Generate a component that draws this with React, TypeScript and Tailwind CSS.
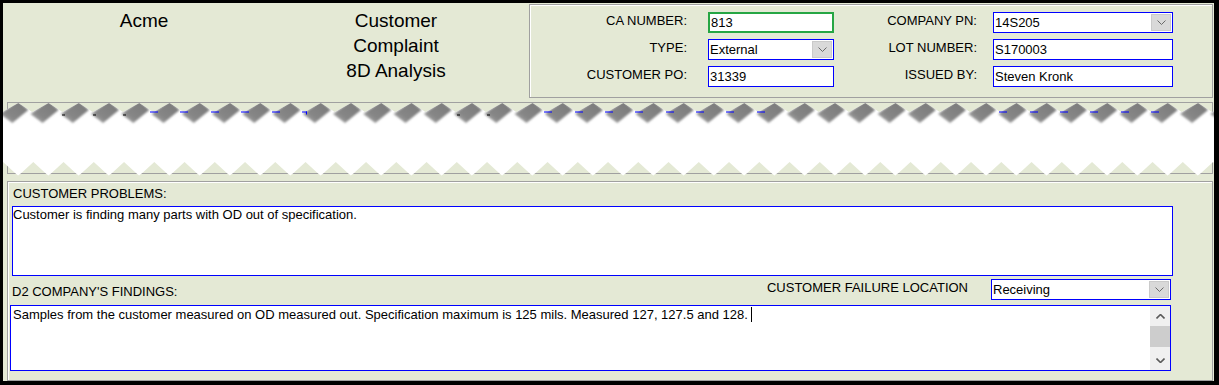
import React from "react";

interface FieldProps {
  value: string;
  width: string;
  green?: boolean;
}

interface RowProps {
  label1: string;
  field1: React.ReactNode;
  label2: string;
  field2: React.ReactNode;
}

// torn paper strip between header and form, page x 3..1214, y 102..176
const PERIOD = 30.25;
const SW = 1211;
const SH = 74;
const OX = 3;
const OY = 102;

const peaks: number[] = [];
for (let k = -1; k < 42; k++) peaks.push(18.3 + PERIOD * k - OX);

const blueDashes = [150, 180, 211, 241, 272, 302, 544, 575, 605, 635, 666, 696, 726, 757, 999, 1030, 1060, 1090, 1121, 1151];
const blackDashes = [62, 93, 123, 457, 487];

const Chevron: React.FC<{ up?: boolean; bold?: boolean }> = ({ up = false, bold = false }) => (
  <svg width="9" height="5" viewBox="0 0 9 5">
    <polyline
      points={up ? "0.5,4.5 4.5,0.5 8.5,4.5" : "0.5,0.5 4.5,4.5 8.5,0.5"}
      fill="none"
      stroke={bold ? "#5a5a5a" : "#6a6a6a"}
      strokeWidth={bold ? 1.6 : 1}
    />
  </svg>
);

const TextBox: React.FC<FieldProps> = ({ value, width, green = false }) => (
  <div
    className={`h-[21px] bg-white flex items-center pl-[1px] ${
      green ? "border-2 border-[#26a644]" : "border border-[#0000ff]"
    } ${width}`}
  >
    {value}
  </div>
);

const Combo: React.FC<FieldProps> = ({ value, width }) => (
  <div className={`h-[21px] bg-white border border-[#0000ff] flex items-center ${width}`}>
    <span className="flex-1 pl-[1px]">{value}</span>
    <span className="w-[20px] h-[17px] mr-[1px] bg-[#d9d9d9] border border-[#cacaca] flex items-center justify-center">
      <Chevron />
    </span>
  </div>
);

const Row: React.FC<RowProps> = ({ label1, field1, label2, field2 }) => (
  <div className="flex items-start">
    <div className="w-[157px] text-right mt-[1px] leading-[15px]">{label1}</div>
    <div className="ml-[21px] w-[126px]">{field1}</div>
    <div className="w-[143px] text-right mt-[1px] leading-[15px]">{label2}</div>
    <div className="ml-[16px] w-[180px]">{field2}</div>
  </div>
);

const TornStrip: React.FC = () => {
  let top = "";
  peaks.forEach((p) => {
    top += `${p.toFixed(2)},1 ${(p + 14).toFixed(2)},10 `;
  });
  let bottom = "";
  [...peaks].reverse().forEach((p) => {
    const c = p + 15;
    bottom += `${(c + 15).toFixed(2)},73.5 ${(c + 12).toFixed(2)},71 ${c.toFixed(2)},60 ${(c - 12).toFixed(2)},71 `;
  });
  const paper = `${top}${bottom}`;

  return (
    <svg width={SW} height={SH} viewBox={`0 0 ${SW} ${SH}`} className="block">
      <defs>
        <clipPath id="paper">
          <polygon points={paper} />
        </clipPath>
        <filter id="soft" x="-20%" y="-20%" width="140%" height="140%">
          <feGaussianBlur stdDeviation="1" />
        </filter>
        <linearGradient id="shade" x1="1" y1="0" x2="0" y2="1">
          <stop offset="0" stopColor="#787878" />
          <stop offset="0.65" stopColor="#868686" />
          <stop offset="1" stopColor="#b4b4b4" />
        </linearGradient>
      </defs>
      <rect x="0" y="0" width={SW} height={SH} fill="#e4e9d5" />
      {/* group frame behind the paper */}
      <line x1="4" y1="0.5" x2="1210" y2="0.5" stroke="#a0a0a0" />
      <line x1="4.5" y1="0" x2="4.5" y2="72" stroke="#a0a0a0" />
      <line x1="1209.5" y1="0" x2="1209.5" y2="72" stroke="#a0a0a0" />
      <line x1="4" y1="71.5" x2="1210" y2="71.5" stroke="#a0a0a0" />
      <polygon points={paper} fill="#ffffff" />
      <g clipPath="url(#paper)">
        <g filter="url(#soft)">
          {peaks.map((p, i) => (
            <polygon
              key={i}
              points={`${p},-1 ${p + 10},8 ${p - 6},21 ${p - 18},12`}
              fill="url(#shade)"
            />
          ))}
        </g>
      </g>
      {blueDashes.map((x, i) => (
        <rect key={`b${i}`} x={x - OX} y={111.5 - OY} width={i === 5 ? 5 : 8} height="1" fill="#0000ff" />
      ))}
      <rect x={306 - OX} y={111.5 - OY} width="1" height="3" fill="#0000ff" />
      {blackDashes.map((x, i) => (
        <rect key={`k${i}`} x={x - OX} y={114.5 - OY} width="3" height="1" fill="#000000" />
      ))}
    </svg>
  );
};

const ComplaintForm: React.FC = () => {
  return (
    <div className="w-[1219px] h-[385px] bg-black pt-[3px] pl-[3px] pr-[5px] pb-[4px] font-['Liberation_Sans',Arial,sans-serif] text-[13px] text-black">
      <div className="w-[1211px] h-[378px] bg-[#e4e9d5] flex flex-col">
        {/* header */}
        <div className="h-[99px] flex items-start shrink-0">
          <div className="w-[526px] flex pt-[5px] text-[19px] leading-[25px]">
            <div className="w-[282px] text-center">Acme</div>
            <div className="w-[222px] text-center">
              <div>Customer</div>
              <div>Complaint</div>
              <div>8D Analysis</div>
            </div>
          </div>
          <div className="mt-[1px] w-[684px] h-[94px] border border-[#a0a0a0] shadow-[inset_1px_1px_0_#ffffff] pt-[7px] flex flex-col gap-[6px]">
            <Row
              label1="CA NUMBER:"
              field1={<TextBox value="813" width="w-[126px]" green />}
              label2="COMPANY PN:"
              field2={<Combo value="14S205" width="w-[180px]" />}
            />
            <Row
              label1="TYPE:"
              field1={<Combo value="External" width="w-[126px]" />}
              label2="LOT NUMBER:"
              field2={<TextBox value="S170003" width="w-[180px]" />}
            />
            <Row
              label1="CUSTOMER PO:"
              field1={<TextBox value="31339" width="w-[126px]" />}
              label2="ISSUED BY:"
              field2={<TextBox value="Steven Kronk" width="w-[180px]" />}
            />
          </div>
        </div>

        <div className="shrink-0">
          <TornStrip />
        </div>

        {/* complaint details */}
        <div className="mt-[5px] ml-[4px] w-[1206px] h-[200px] border border-[#a0a0a0] shadow-[inset_1px_1px_0_#ffffff] flex flex-col">
          <div className="ml-[5px] mt-[4px] leading-[15px]">CUSTOMER PROBLEMS:</div>
          <div className="ml-[4px] mt-[5px] w-[1161px] h-[70px] bg-white border border-[#0000ff] leading-[15px]">
            Customer is finding many parts with OD out of specification.
          </div>
          <div className="mt-[3px] flex items-start h-[21px]">
            <div className="ml-[4px] mt-[5px] flex-1 leading-[15px]">D2 COMPANY'S FINDINGS:</div>
            <div className="mt-[1px] leading-[15px]">CUSTOMER FAILURE LOCATION</div>
            <div className="ml-[23px] mr-[41px]">
              <Combo value="Receiving" width="w-[180px]" />
            </div>
          </div>
          <div className="ml-[2px] mt-[5px] w-[1161px] h-[66px] bg-white border border-[#0000ff] flex">
            <div className="flex-1 pl-[2px] pt-[1px] leading-[15px]">
              Samples from the customer measured on OD measured out. Specification maximum is 125 mils. Measured 127, 127.5 and 128.
              <span className="inline-block w-px h-[15px] bg-black align-top ml-[3px]" />
            </div>
            <div className="w-[20px] bg-[#f0f0f0] flex flex-col">
              <div className="h-[20px] flex items-center justify-center">
                <Chevron up bold />
              </div>
              <div className="h-[21px] bg-[#cdcdcd]" />
              <div className="flex-1" />
              <div className="h-[20px] flex items-center justify-center">
                <Chevron bold />
              </div>
            </div>
          </div>
        </div>
      </div>
    </div>
  );
};

export default ComplaintForm;
